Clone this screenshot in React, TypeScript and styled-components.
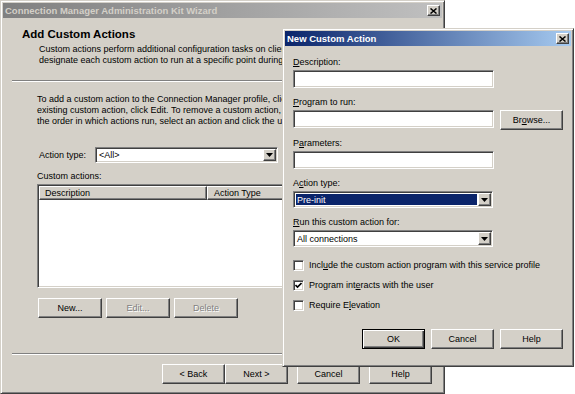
import React from 'react';
import styled, { createGlobalStyle, css } from 'styled-components';

const FACE = '#d4d0c8';
const SHADOW = '#808080';
const DARK = '#404040';
const FONT = '"Liberation Sans", Arial, sans-serif';

const Global = createGlobalStyle`
  html, body { margin: 0; padding: 0; background: #fff; }
  body { font-family: ${FONT}; font-size: 9px; color: #000; }
  #root { width: 575px; height: 394px; }
`;

const raised = css`
  border: 1px solid;
  border-color: #fff ${DARK} ${DARK} #fff;
  box-shadow: inset -1px -1px 0 ${SHADOW}, inset 1px 1px 0 ${FACE};
`;

const sunken = css`
  border: 1px solid;
  border-color: ${SHADOW} #fff #fff ${SHADOW};
  box-shadow: inset 1px 1px 0 ${DARK}, inset -1px -1px 0 ${FACE};
`;

const Desktop = styled.div`
  position: relative;
  width: 575px;
  height: 394px;
  overflow: hidden;
  background: #fff;
`;

const Window = styled.div<{ $x: number; $y: number; $w: number; $h: number }>`
  position: absolute;
  left: ${(p) => p.$x}px;
  top: ${(p) => p.$y}px;
  width: ${(p) => p.$w}px;
  height: ${(p) => p.$h}px;
  box-sizing: border-box;
  background: ${FACE};
  border: 1px solid;
  border-color: ${FACE} ${DARK} ${DARK} ${FACE};
  box-shadow: inset 1px 1px 0 #fff, inset -1px -1px 0 ${SHADOW};
  padding: 2px;
  display: flex;
  flex-direction: column;
  overflow: hidden;
`;

const TitleBar = styled.div<{ $active?: boolean }>`
  flex: none;
  height: 15px;
  display: flex;
  align-items: center;
  justify-content: space-between;
  padding: 0 2px 0 2px;
  background: ${(p) =>
    p.$active
      ? 'linear-gradient(to right, #0a246a, #a6caf0)'
      : 'linear-gradient(to right, #808080, #c0c0c0)'};
  color: ${(p) => (p.$active ? '#fff' : FACE)};
  font-weight: bold;
  font-size: 9.5px;
  white-space: nowrap;
`;

const CloseBtn = styled.div`
  width: 13px;
  height: 11px;
  box-sizing: border-box;
  background: ${FACE};
  ${raised};
  display: flex;
  align-items: center;
  justify-content: center;
`;

const CloseGlyph = () => (
  <svg width="7" height="6" viewBox="0 0 7 6">
    <path d="M0.5 0.5 L6.5 5.5 M6.5 0.5 L0.5 5.5" stroke="#000" strokeWidth="1.5" />
  </svg>
);

const Body = styled.div`
  flex: 1;
  display: flex;
  flex-direction: column;
  min-height: 0;
`;

/* ---------- Wizard ---------- */

const Header = styled.div`
  padding: 9px 0 0 19px;
`;

const HeaderTitle = styled.div`
  font-size: 11.5px;
  font-weight: bold;
  line-height: 14px;
`;

const HeaderText = styled.div`
  padding-left: 17px;
  margin-top: 3px;
  line-height: 11px;
  white-space: nowrap;
`;

const Rule = styled.div<{ $mt: number }>`
  margin: ${(p) => p.$mt}px 9px 0 9px;
  height: 0;
  border-top: 1px solid ${SHADOW};
  border-bottom: 1px solid #fff;
`;

const Paragraph = styled.div`
  margin-top: 12px;
  padding-left: 34px;
  line-height: 11px;
  white-space: nowrap;
`;

const FilterRow = styled.div`
  margin-top: 20px;
  padding-left: 36px;
  display: flex;
  align-items: center;
`;

const FilterLabel = styled.span`
  width: 56px;
`;

const SmallLabel = styled.div<{ $mt: number; $pl: number }>`
  margin-top: ${(p) => p.$mt}px;
  padding-left: ${(p) => p.$pl}px;
  line-height: 12px;
  white-space: nowrap;
`;

const ListView = styled.div`
  margin: 2px 0 0 34px;
  width: 371px;
  height: 104px;
  box-sizing: border-box;
  background: #fff;
  ${sunken};
  padding: 1px;
`;

const ListHeader = styled.div`
  display: flex;
  height: 14px;
`;

const HeaderCell = styled.div<{ $w?: number; $pl: number }>`
  ${(p) => (p.$w ? `width: ${p.$w}px; flex: none;` : 'flex: 1;')}
  box-sizing: border-box;
  background: ${FACE};
  ${raised};
  padding-left: ${(p) => p.$pl}px;
  display: flex;
  align-items: center;
  white-space: nowrap;
`;

const ButtonRow = styled.div<{ $mt: number; $pl?: number; $gap: number; $end?: boolean }>`
  margin-top: ${(p) => p.$mt}px;
  padding-left: ${(p) => p.$pl ?? 0}px;
  display: flex;
  gap: ${(p) => p.$gap}px;
  justify-content: ${(p) => (p.$end ? 'flex-end' : 'flex-start')};
`;

const Btn = styled.button<{ $w?: number; $default?: boolean; $space?: number }>`
  width: ${(p) => p.$w ?? 63}px;
  height: 20px;
  box-sizing: border-box;
  padding: 0;
  margin: 0 0 0 ${(p) => p.$space ?? 0}px;
  font-family: ${FONT};
  font-size: 9px;
  color: #000;
  background: ${FACE};
  ${raised};
  ${(p) =>
    p.$default &&
    css`
      border: 1px solid #000;
      box-shadow: inset 1px 1px 0 #fff, inset -1px -1px 0 ${DARK}, inset -2px -2px 0 ${SHADOW};
    `}
  &:disabled {
    color: ${SHADOW};
    text-shadow: 1px 1px 0 #fff;
  }
`;

const Spacer = styled.div`
  flex: 1;
`;

const Footer = styled.div`
  padding: 0 0 7px 0;
`;

const FooterButtons = styled.div`
  margin-top: 9px;
  padding-right: 10px;
  display: flex;
  justify-content: flex-end;
`;

/* ---------- Fields ---------- */

const Edit = styled.div<{ $w: number }>`
  width: ${(p) => p.$w}px;
  height: 18px;
  box-sizing: border-box;
  background: #fff;
  ${sunken};
`;

const Combo = styled.div<{ $w: number; $h: number }>`
  width: ${(p) => p.$w}px;
  height: ${(p) => p.$h}px;
  box-sizing: border-box;
  background: #fff;
  ${sunken};
  padding: 1px;
  display: flex;
`;

const ComboValue = styled.div`
  flex: 1;
  display: flex;
  padding: 1px;
`;

const ComboText = styled.span<{ $selected?: boolean }>`
  flex: 1;
  display: flex;
  align-items: center;
  padding-left: 1px;
  background: ${(p) => (p.$selected ? '#0a246a' : 'transparent')};
  color: ${(p) => (p.$selected ? '#fff' : '#000')};
  white-space: nowrap;
`;

const DropBtn = styled.div`
  width: 13px;
  box-sizing: border-box;
  background: ${FACE};
  ${raised};
  display: flex;
  align-items: center;
  justify-content: center;
`;

const DropArrow = () => (
  <svg width="7" height="4" viewBox="0 0 7 4">
    <path d="M0 0 H7 L3.5 4 Z" fill="#000" />
  </svg>
);

const ComboBox = ({ w, h, value, selected }: { w: number; h: number; value: string; selected?: boolean }) => (
  <Combo $w={w} $h={h}>
    <ComboValue>
      <ComboText $selected={selected}>{value}</ComboText>
    </ComboValue>
    <DropBtn>
      <DropArrow />
    </DropBtn>
  </Combo>
);

/* ---------- Dialog ---------- */

const DialogBody = styled.div`
  flex: 1;
  padding: 10px 8px 0 8px;
  display: flex;
  flex-direction: column;
`;

const Group = styled.div<{ $mt: number }>`
  margin-top: ${(p) => p.$mt}px;
  display: flex;
  flex-direction: column;
`;

const FieldLabel = styled.div`
  line-height: 12px;
  margin-bottom: 2px;
  white-space: nowrap;
`;

const FieldRow = styled.div`
  display: flex;
  align-items: flex-start;
  gap: 6px;
`;

const U = styled.span`
  text-decoration: underline;
`;

const Checks = styled.div`
  margin-top: 8px;
  display: flex;
  flex-direction: column;
`;

const CheckRow = styled.div`
  height: 20px;
  display: flex;
  align-items: center;
  gap: 5px;
  white-space: nowrap;
`;

const CheckBox = styled.span`
  width: 11px;
  height: 11px;
  box-sizing: border-box;
  background: #fff;
  ${sunken};
  display: flex;
  align-items: center;
  justify-content: center;
`;

const CheckMark = () => (
  <svg width="7" height="7" viewBox="0 0 7 7">
    <path d="M0.5 3 L2.5 5 L6.5 1" stroke="#000" strokeWidth="1.6" fill="none" />
  </svg>
);

const Check = ({ checked, children }: { checked?: boolean; children: React.ReactNode }) => (
  <CheckRow>
    <CheckBox>{checked && <CheckMark />}</CheckBox>
    <span>{children}</span>
  </CheckRow>
);

export default function App() {
  return (
    <>
      <Global />
      <Desktop>
        <Window $x={0} $y={0} $w={445} $h={394}>
          <TitleBar>
            <span>Connection Manager Administration Kit Wizard</span>
            <CloseBtn>
              <CloseGlyph />
            </CloseBtn>
          </TitleBar>
          <Body>
            <Header>
              <HeaderTitle>Add Custom Actions</HeaderTitle>
              <HeaderText>
                Custom actions perform additional configuration tasks on client computers. You can
                <br />
                designate each custom action to run at a specific point during the connection process.
              </HeaderText>
            </Header>
            <Rule $mt={14} />
            <Paragraph>
              To add a custom action to the Connection Manager profile, click New. To edit an
              <br />
              existing custom action, click Edit. To remove a custom action, click Delete. To change
              <br />
              the order in which actions run, select an action and click the up or down arrow.
            </Paragraph>
            <FilterRow>
              <FilterLabel>Action type:</FilterLabel>
              <ComboBox w={183} h={16} value="<All>" />
            </FilterRow>
            <SmallLabel $mt={7} $pl={34}>
              Custom actions:
            </SmallLabel>
            <ListView>
              <ListHeader>
                <HeaderCell $w={168} $pl={5}>
                  Description
                </HeaderCell>
                <HeaderCell $pl={6}>Action Type</HeaderCell>
              </ListHeader>
            </ListView>
            <ButtonRow $mt={10} $pl={35} $gap={4}>
              <Btn $w={64}>New...</Btn>
              <Btn $w={64} disabled>
                Edit...
              </Btn>
              <Btn $w={64} disabled>
                Delete
              </Btn>
            </ButtonRow>
            <Spacer />
            <Footer>
              <Rule $mt={0} />
              <FooterButtons>
                <Btn>&lt; Back</Btn>
                <Btn>Next &gt;</Btn>
                <Btn $space={9}>Cancel</Btn>
                <Btn $space={9}>Help</Btn>
              </FooterButtons>
            </Footer>
          </Body>
        </Window>

        <Window $x={282} $y={28} $w={292} $h={339}>
          <TitleBar $active>
            <span>New Custom Action</span>
            <CloseBtn>
              <CloseGlyph />
            </CloseBtn>
          </TitleBar>
          <DialogBody>
            <Group $mt={0}>
              <FieldLabel>
                <U>D</U>escription:
              </FieldLabel>
              <Edit $w={201} />
            </Group>
            <Group $mt={8}>
              <FieldLabel>
                <U>P</U>rogram to run:
              </FieldLabel>
              <FieldRow>
                <Edit $w={201} />
                <Btn $w={63}>
                  Br<U>o</U>wse...
                </Btn>
              </FieldRow>
            </Group>
            <Group $mt={7}>
              <FieldLabel>
                P<U>a</U>rameters:
              </FieldLabel>
              <Edit $w={201} />
            </Group>
            <Group $mt={8}>
              <FieldLabel>
                A<U>c</U>tion type:
              </FieldLabel>
              <ComboBox w={200} h={17} value="Pre-init" selected />
            </Group>
            <Group $mt={8}>
              <FieldLabel>
                <U>R</U>un this custom action for:
              </FieldLabel>
              <ComboBox w={200} h={17} value="All connections" />
            </Group>
            <Checks>
              <Check>
                Incl<U>u</U>de the custom action program with this service profile
              </Check>
              <Check checked>
                Program int<U>e</U>racts with the user
              </Check>
              <Check>
                Require E<U>l</U>evation
              </Check>
            </Checks>
            <ButtonRow $mt={14} $gap={6} $end>
              <Btn $default>OK</Btn>
              <Btn>Cancel</Btn>
              <Btn>Help</Btn>
            </ButtonRow>
          </DialogBody>
        </Window>
      </Desktop>
    </>
  );
}
